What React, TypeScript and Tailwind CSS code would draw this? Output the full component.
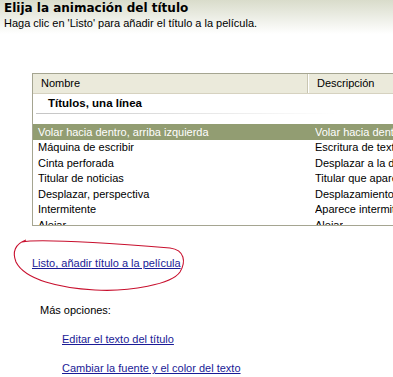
import React from "react";

const rows: [string, string][] = [
  ["Volar hacia dentro, arriba izquierda", "Volar hacia dentro, arriba izquierda"],
  ["Máquina de escribir", "Escritura de texto"],
  ["Cinta perforada", "Desplazar a la derecha"],
  ["Titular de noticias", "Titular que aparece"],
  ["Desplazar, perspectiva", "Desplazamiento"],
  ["Intermitente", "Aparece intermitente"],
  ["Alejar", "Alejar"],
];

export default function App() {
  return (
    <div className="relative w-[393px] h-[377px] overflow-hidden bg-white text-black font-['Liberation_Sans',sans-serif] text-[11px]">
      <div className="h-[34px] bg-gradient-to-b from-[#d9dccb] to-white pl-[4px] pt-[1px]">
        <div className="font-['DejaVu_Sans',sans-serif] font-bold text-[12px] leading-[15px] whitespace-nowrap">
          Elija la animación del título
        </div>
        <div className="leading-[13px] whitespace-nowrap mt-[1px]">
          Haga clic en 'Listo' para añadir el título a la película.
        </div>
      </div>

      <div className="ml-[32px] mt-[39px] h-[153px] border border-r-0 border-[#a5a591] overflow-hidden flex flex-col">
        <div className="h-[20px] shrink-0 flex bg-[#ebeadb] border-b border-[#d6d2c0]">
          <div className="w-[275px] shrink-0 flex items-center pl-[8px] border-r border-[#c9c6b2]">Nombre</div>
          <div className="flex items-center pl-[8px] border-l border-white whitespace-nowrap">Descripción</div>
        </div>
        <div className="h-[19px] shrink-0 flex items-center pl-[15px] font-bold text-[11.5px]">
          Títulos, una línea
        </div>
        <div className="h-px shrink-0 ml-[3px] w-[300px] bg-gradient-to-r from-[#c4c4c4] via-[#e4e4e4] to-white" />
        <div className="h-[10px] shrink-0" />
        {rows.map(([name, desc], i) => (
          <div
            key={i}
            className={
              "h-[15.5px] shrink-0 flex items-center whitespace-nowrap " +
              (i === 0 ? "bg-[#929d72] text-white" : "")
            }
          >
            <div className="w-[282px] shrink-0 pl-[5px] overflow-hidden">{name}</div>
            <div className="overflow-hidden">{desc}</div>
          </div>
        ))}
      </div>

      <div className="ml-[32px] mt-[31px] leading-[13px]">
        <span className="text-[#1a1a96] underline">Listo, añadir título a la película</span>
      </div>
      <div className="ml-[40px] mt-[34px] leading-[13px]">Más opciones:</div>
      <div className="ml-[62px] mt-[16px] leading-[13px]">
        <span className="text-[#1a1a96] underline">Editar el texto del título</span>
      </div>
      <div className="ml-[62px] mt-[16px] leading-[13px]">
        <span className="text-[#1a1a96] underline">Cambiar la fuente y el color del texto</span>
      </div>

      <svg
        className="absolute left-0 top-[230px]"
        width="200"
        height="70"
        viewBox="0 230 200 70"
        fill="none"
      >
        <path
          d="M 22 242 C 40 238, 120 244, 170 248 C 185 250, 186 262, 180 272 C 172 284, 130 292, 95 290 C 60 288, 25 280, 16 262 C 12 252, 15 244, 26 240"
          stroke="#c8102e"
          strokeWidth="1.1"
        />
      </svg>
    </div>
  );
}
